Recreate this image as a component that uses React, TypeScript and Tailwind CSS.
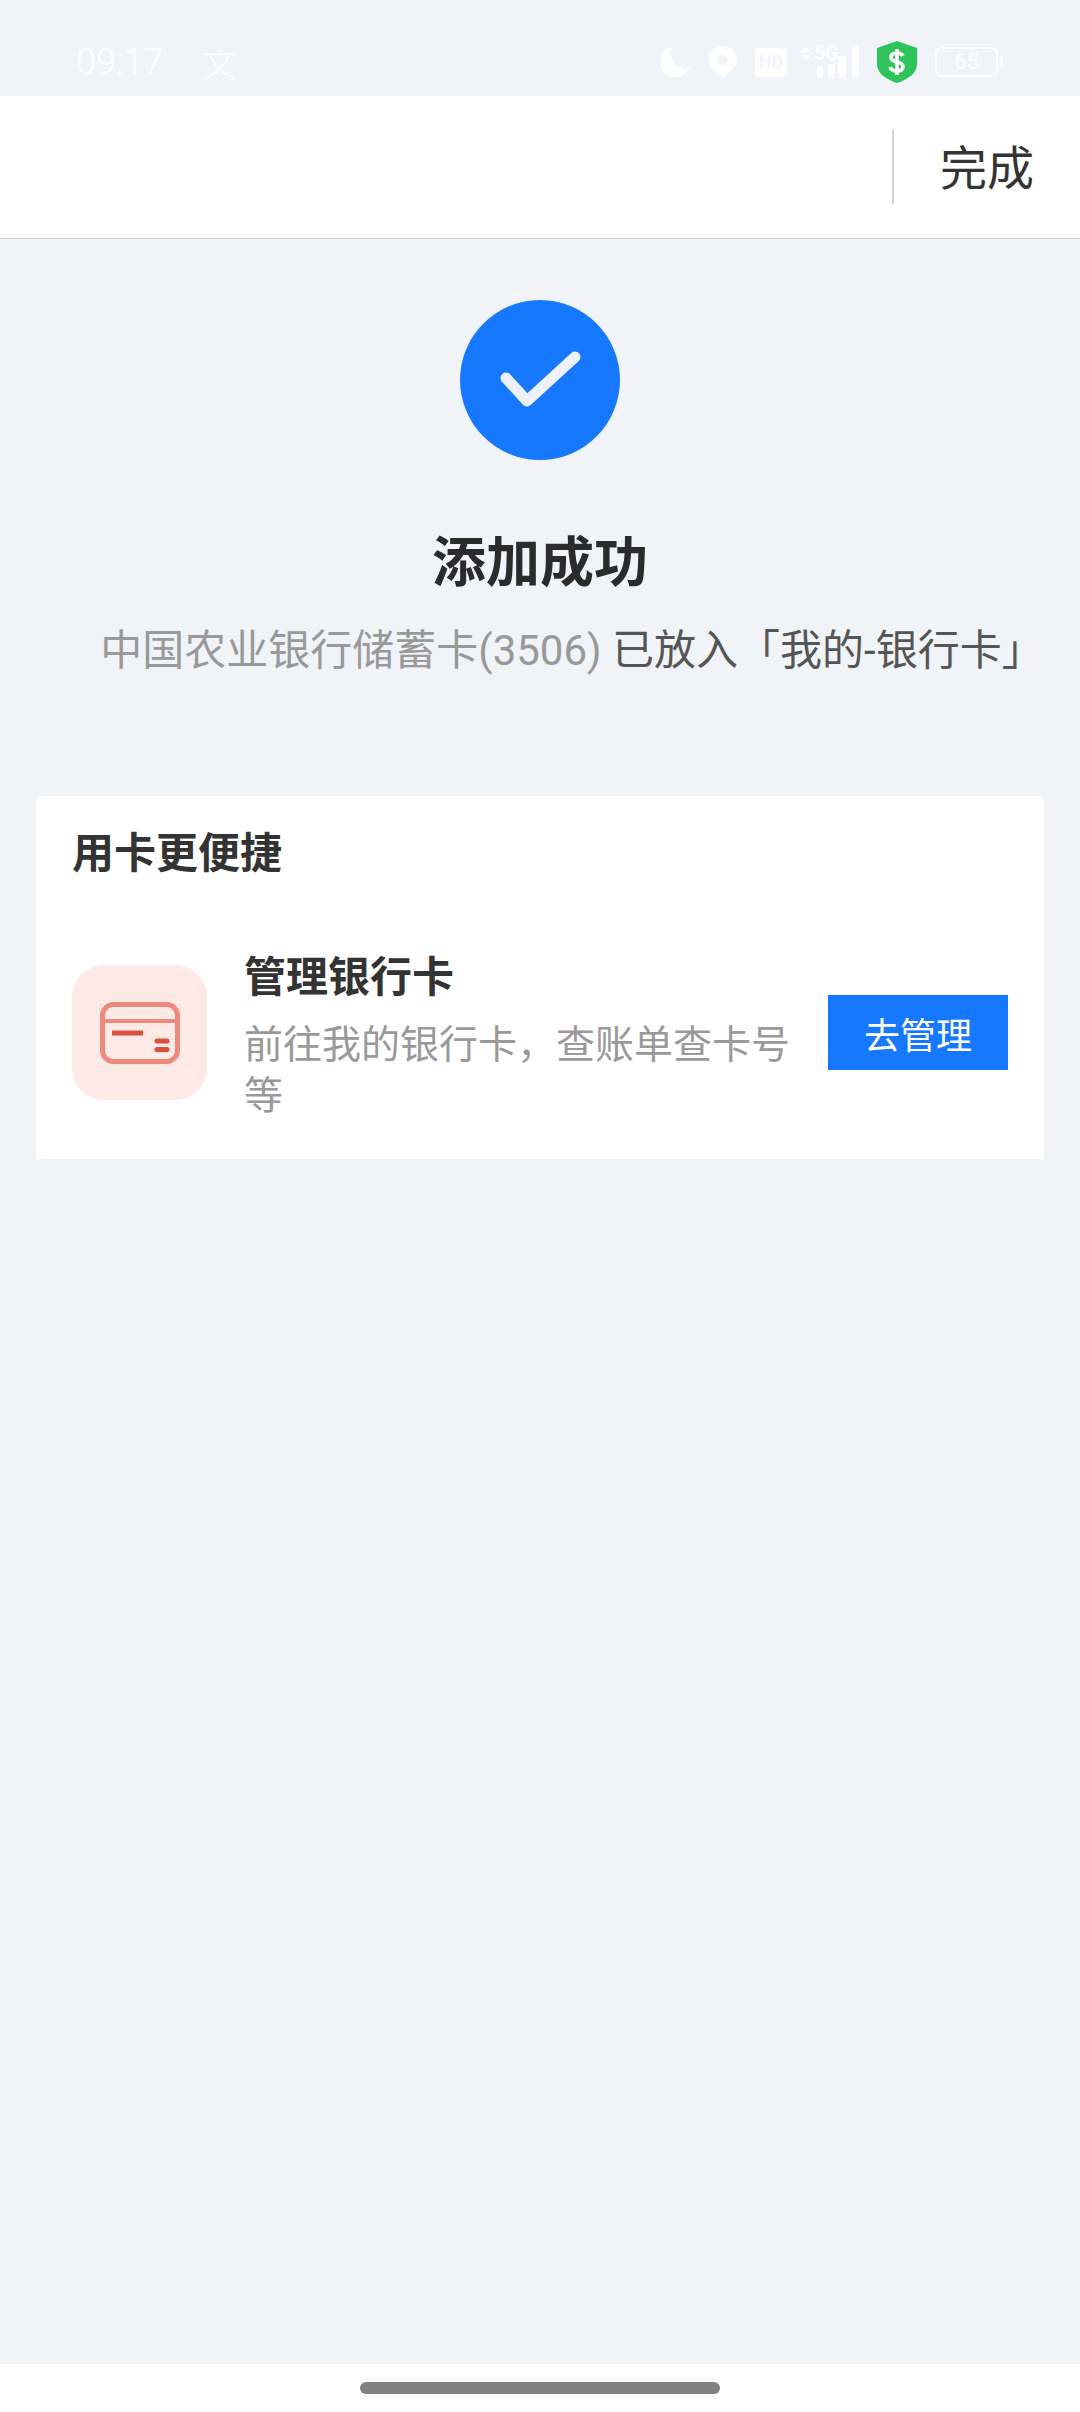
const font = "font-['Noto_Sans_CJK_SC','Roboto',sans-serif]";

const StatusIcons = () => (
  <div className="flex items-center">
    <svg width="30" height="30" viewBox="0 0 30 30" fill="#fff">
      <path d="M11 0C4 2 0 8 0 15c0 8 7 15 15 15 7 0 12-4 15-10-3 2-6 2-9 1C14 19 9 10 11 0z" />
    </svg>
    <svg width="29" height="32" viewBox="0 0 29 32" className="ml-[18px]" fill="#fff" fillRule="evenodd">
      <path d="M14.5 0C6.5 0 0 6 0 13.5 0 21 9 27 14.5 32 20 27 29 21 29 13.5 29 6 22.5 0 14.5 0zm0 9a5 5 0 1 1 0 10 5 5 0 0 1 0-10z" />
    </svg>
    <div className="ml-[18px] flex h-[29px] w-[32px] items-center justify-center rounded-[4px] bg-white font-['Roboto'] text-[18px] leading-none font-bold text-[#f0f3f8]">
      HD
    </div>
    <div className="relative ml-[13px] h-[32px] w-[59px]">
      <span className="absolute top-[-2px] left-[14px] font-['Roboto'] text-[20px] leading-[18px] font-bold tracking-tight text-white">5G</span>
      <svg width="59" height="32" viewBox="0 0 59 32" fill="#fff">
        <path d="M6 1l5 5H1zM6 14l5-5H1z" />
        <rect x="17" y="20" width="6" height="12" rx="1" />
        <rect x="28" y="18" width="7" height="14" rx="1" />
        <rect x="38" y="10" width="8" height="22" rx="1" />
        <rect x="52" y="0" width="7" height="32" rx="1" />
      </svg>
    </div>
    <svg width="40" height="42" viewBox="0 0 40 42" className="ml-[18px]">
      <path d="M20 0l20 7v16c0 9-8 15-20 19C8 38 0 32 0 23V7z" fill="#2fc45a" />
      <path d="M26 15c-1-2-3-3-6-3-4 0-6 2-6 4.500 0 6 12 3 12 9 0 3-2 4.500-6 4.500-3 0-6-1-7-4M20 8v26" fill="none" stroke="#fff" strokeWidth="3.600" />
    </svg>
    <div className="ml-[18px] flex items-center">
      <div className="flex h-[30px] w-[63px] items-center justify-center rounded-[7px] border-2 border-white font-['Roboto'] text-[22px] leading-none text-white">
        65
      </div>
      <div className="ml-[2px] h-[14px] w-[3px] rounded-r bg-white" />
    </div>
  </div>
);

const CardIcon = () => (
  <svg width="80" height="62" viewBox="0 0 80 62" fill="none">
    <rect x="2.500" y="2.500" width="75" height="57" rx="11" stroke="#ee8a7d" strokeWidth="5" />
    <path d="M2 19h76" stroke="#ee8a7d" strokeWidth="4" />
    <path d="M12 31h31" stroke="#d9503f" strokeWidth="5" />
    <path d="M57 39h10M57 47.500h10" stroke="#d9503f" strokeWidth="5" strokeLinecap="round" />
  </svg>
);

export default function App() {
  return (
    <div className={`flex h-[2412px] w-[1080px] flex-col bg-[#f0f3f8] ${font}`}>
      {/* status bar */}
      <div className="flex h-[96px] items-center justify-between pt-[28px] pr-[77px] pl-[76px]">
        <div className="flex items-center text-white">
          <span className="font-['Roboto'] text-[36px] leading-none font-light">09:17</span>
          <span className="ml-[39px] text-[34px] leading-none font-light">文</span>
        </div>
        <StatusIcons />
      </div>

      {/* nav */}
      <div className="flex h-[143px] items-center justify-end border-b border-[#cfd0d3] bg-white">
        <div className="h-[74px] w-[2px] bg-[#d4d4d4]" />
        <div className="mr-[46px] mb-[6px] ml-[46px] text-[47px] leading-none text-[#333333]">完成</div>
      </div>

      {/* result */}
      <div className="flex flex-col items-center pt-[61px]">
        <div className="flex size-[160px] items-center justify-center rounded-full bg-[#1677ff]">
          <svg width="160" height="160" viewBox="0 0 160 160" fill="none">
            <path d="M46 78l21 23 48-44" stroke="#eef2f8" strokeWidth="11" strokeLinecap="round" strokeLinejoin="round" />
          </svg>
        </div>
        <div className="mt-[60px] text-[54px] leading-[78px] font-bold text-[#2b2b2b]">添加成功</div>
        <div className="mt-[22px] ml-[64px] font-['Roboto','Noto_Sans_CJK_SC',sans-serif] text-[42px] leading-[62px] whitespace-nowrap text-[#555555]">
          <span className="text-[#999999]">中国农业银行储蓄卡(3506)</span> 已放入「我的-银行卡」
        </div>
      </div>

      {/* card */}
      <div className="mx-[36px] mt-[114px] rounded-[4px] bg-white pt-[25px] pr-[36px] pb-[38px] pl-[36px]">
        <div className="text-[42px] leading-[58px] font-bold text-[#333333]">用卡更便捷</div>
        <div className="mt-[65px] flex items-center">
          <div className="flex size-[135px] shrink-0 items-center justify-center rounded-[32px] bg-[#fde9e5]">
            <CardIcon />
          </div>
          <div className="ml-[37px] mb-[3px] w-[560px] shrink-0">
            <div className="text-[42px] leading-[60px] font-bold text-[#333333]">管理银行卡</div>
            <div className="mt-[12px] text-[39px] leading-[51px] text-[#999999]">前往我的银行卡，查账单查卡号等</div>
          </div>
          <div className="ml-auto flex h-[75px] w-[180px] shrink-0 items-center justify-center bg-[#1677ff] text-[36px] leading-none text-white">
            去管理
          </div>
        </div>
      </div>

      {/* home indicator */}
      <div className="mt-auto flex h-[48px] items-center justify-center bg-white">
        <div className="h-[12px] w-[360px] rounded-full bg-[#808080]" />
      </div>
    </div>
  );
}
